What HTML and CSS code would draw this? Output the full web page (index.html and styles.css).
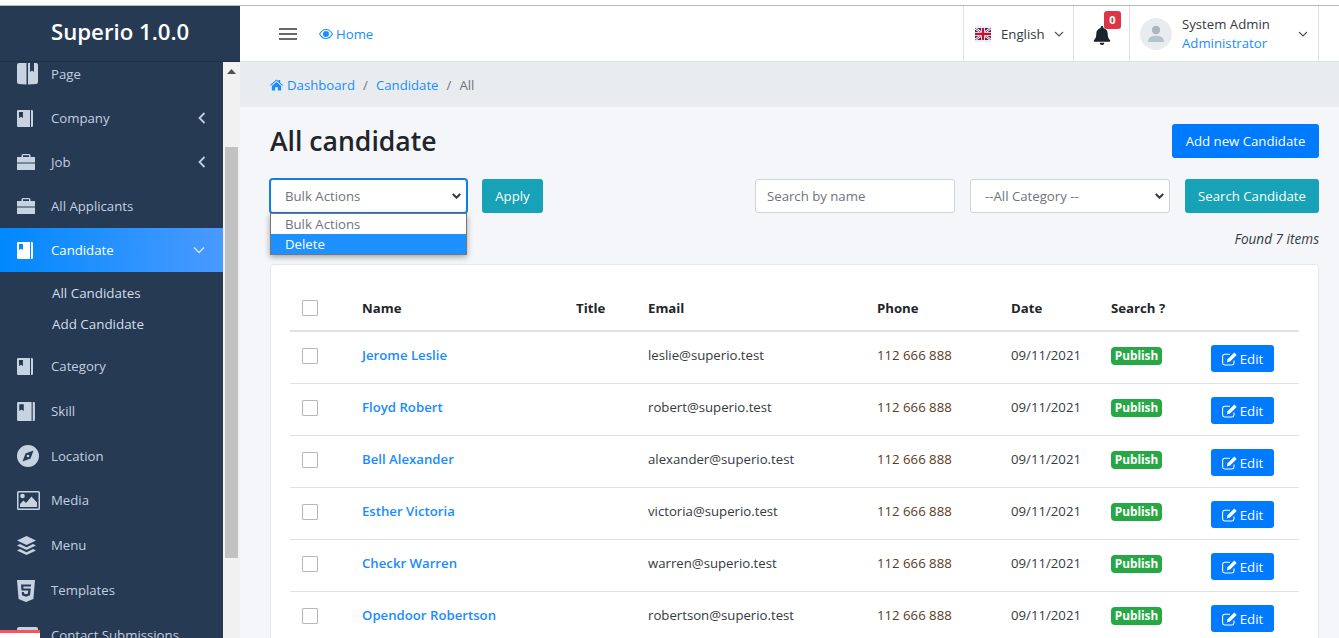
FILE: index.html
```html
<!DOCTYPE html>
<html lang="en">
<head>
<meta charset="utf-8">
<title>All candidate</title>
<link rel="stylesheet" href="styles.css">
</head>
<body>
<svg class="defs" width="0" height="0" aria-hidden="true">
  <symbol id="i-book" viewBox="0 0 16 17"><path fill-rule="evenodd" d="M1.200 0H13V17H1.200A1.200 1.200 0 0 1 0 15.800V1.200A1.200 1.200 0 0 1 1.200 0ZM2 2V8L4 6.800L6 8V2Z"/><path d="M14 0H14.800A1.200 1.200 0 0 1 16 1.200V15.800A1.200 1.200 0 0 1 14.800 17H14Z"/></symbol>
  <symbol id="i-brief" viewBox="0 0 18 16"><path d="M6 0H12A1.500 1.500 0 0 1 13.500 1.500V3H18V8.500H0V3H4.500V1.500A1.500 1.500 0 0 1 6 0ZM6 1.300V3H12V1.300Z" fill-rule="evenodd"/><path d="M0 9.500H18V16H0Z"/></symbol>
  <symbol id="i-edit" viewBox="0 0 15 14"><path fill="none" stroke="#fff" stroke-width="1.100" d="M12 8.500V11A2.200 2.200 0 0 1 9.800 13H2.700A2.200 2.200 0 0 1 .6 11V4.300A2.200 2.200 0 0 1 2.700 2.200H8"/><path fill="#fff" d="M12.300 .5L14.700 2.900L8 9.600L4.800 10.400L5.600 7.200Z"/></symbol>
</svg>

<div class="topstrip"></div>
<div class="app">
  <aside class="sidebar">
    <div class="brand">Superio 1.0.0</div>
    <div class="side-body">
      <nav class="menu">
        <a class="item first">
          <svg class="ic" width="21" height="23" viewBox="0 0 21 23"><path d="M2 0H9.500V21.500L2 21A2 2 0 0 1 0 19V2A2 2 0 0 1 2 0Z"/><path d="M11 0H13V9L15 7.500L17 9V0H19A2 2 0 0 1 21 2V19A2 2 0 0 1 19 21L11 21.500Z"/></svg>
          <span>Page</span>
        </a>
        <a class="item"><svg class="ic" width="16" height="17"><use href="#i-book"/></svg><span>Company</span><svg class="caret" width="8" height="12" viewBox="0 0 8 12"><path d="M6.500 1L1.500 6L6.500 11" fill="none" stroke="currentColor" stroke-width="1.800"/></svg></a>
        <a class="item"><svg class="ic" width="18" height="16"><use href="#i-brief"/></svg><span>Job</span><svg class="caret" width="8" height="12" viewBox="0 0 8 12"><path d="M6.500 1L1.500 6L6.500 11" fill="none" stroke="currentColor" stroke-width="1.800"/></svg></a>
        <a class="item"><svg class="ic" width="18" height="16"><use href="#i-brief"/></svg><span>All Applicants</span></a>
        <a class="item active"><svg class="ic" width="16" height="17"><use href="#i-book"/></svg><span>Candidate</span><svg class="caret down" width="12" height="8" viewBox="0 0 12 8"><path d="M1 1.500L6 6.500L11 1.500" fill="none" stroke="currentColor" stroke-width="1.500"/></svg></a>
        <div class="submenu">
          <a class="subitem">All Candidates</a>
          <a class="subitem">Add Candidate</a>
        </div>
        <a class="item tall"><svg class="ic" width="16" height="17"><use href="#i-book"/></svg><span>Category</span></a>
        <a class="item tall"><svg class="ic" width="18" height="19"><use href="#i-book"/></svg><span>Skill</span></a>
        <a class="item"><svg class="ic" width="22" height="22" viewBox="0 0 22 22"><path fill-rule="evenodd" d="M11 0A11 11 0 1 1 11 22A11 11 0 0 1 11 0ZM16.500 5.500L8.500 8.500L5.500 16.500L13.500 13.500ZM11 9.700A1.300 1.300 0 1 1 11 12.300A1.300 1.300 0 0 1 11 9.700Z"/></svg><span>Location</span></a>
        <a class="item tall"><svg class="ic" width="23" height="19" viewBox="0 0 23 19"><path fill-rule="evenodd" d="M1.500 0H21.500A1.500 1.500 0 0 1 23 1.500V17.500A1.500 1.500 0 0 1 21.500 19H1.500A1.500 1.500 0 0 1 0 17.500V1.500A1.500 1.500 0 0 1 1.500 0ZM1.500 1.500V17.500H21.500V1.500Z"/><circle cx="5.500" cy="5" r="2.300"/><path d="M3 16V13L6.500 9.500L9 12L14.500 5.500L20 11.500V16Z"/></svg><span>Media</span></a>
        <a class="item tall"><svg class="ic" width="19" height="19" viewBox="0 0 19 19"><path d="M9.500 0L19 4.500L9.500 9L0 4.500Z"/><path d="M3 8.100L9.500 11.200L16 8.100L19 9.500L9.500 14L0 9.500Z"/><path d="M3 13.100L9.500 16.200L16 13.100L19 14.500L9.500 19L0 14.500Z"/></svg><span>Menu</span></a>
        <a class="item tall"><svg class="ic" width="18" height="22" viewBox="0 0 18 22"><path fill-rule="evenodd" d="M0 0H18L16.400 19L9 22L1.600 19ZM4 4.500L4.500 10.500H11.300L11 13.500L9 14.200L7 13.500L6.900 12H4.800L5 15.200L9 16.700L13 15.200L13.700 8.500H6.500L6.300 6.500H13.900L14.100 4.500Z"/></svg><span>Templates</span></a>
        <a class="item"><svg class="ic" width="21" height="16" viewBox="0 0 21 16"><rect width="21" height="16" rx="2"/></svg><span>Contact Submissions</span></a>
      </nav>
      <div class="scrollbar">
        <svg class="sb-arrow" width="9" height="5" viewBox="0 0 9 5"><path d="M4.500 0L9 5H0Z"/></svg>
        <div class="sb-thumb"></div>
      </div>
    </div>
    <div class="corner"></div>
  </aside>

  <main class="main">
    <header class="topbar">
      <svg class="burger" width="18" height="12" viewBox="0 0 18 12"><path d="M0 1H18M0 6H18M0 11H18" stroke="#343a40" stroke-width="1.500"/></svg>
      <a class="home">
        <svg width="14" height="10" viewBox="0 0 14 10"><path fill="#1a8cff" fill-rule="evenodd" d="M7 0C10 0 12.600 2 14 5C12.600 8 10 10 7 10C4 10 1.400 8 0 5C1.400 2 4 0 7 0ZM7 1.100C4.600 1.100 2.500 2.600 1.200 5C2.500 7.400 4.600 8.900 7 8.900C9.400 8.900 11.500 7.400 12.800 5C11.500 2.600 9.400 1.100 7 1.100ZM7 2A3 3 0 1 1 7 8A3 3 0 0 1 7 2Z"/></svg>
        Home
      </a>
      <div class="tb-right">
        <div class="tb-cell lang">
          <svg class="flag" width="16" height="16" viewBox="0 0 16 16">
            <rect width="16" height="16" fill="#eee"/>
            <rect y="2" width="16" height="12" fill="#22346e"/>
            <path d="M0 2L16 14M16 2L0 14" stroke="#fff" stroke-width="2.400"/>
            <path d="M0 2L16 14M16 2L0 14" stroke="#c8102e" stroke-width=".8"/>
            <path d="M8 2V14M0 8H16" stroke="#fff" stroke-width="4"/>
            <path d="M8 2V14M0 8H16" stroke="#c8102e" stroke-width="2.400"/>
          </svg>
          <span>English</span>
          <svg class="chev" width="10" height="6" viewBox="0 0 10 6"><path d="M1 1L5 5L9 1" fill="none" stroke="#495057" stroke-width="1.100"/></svg>
        </div>
        <div class="tb-cell bell">
          <svg class="bell-ic" width="18" height="19" viewBox="0 0 18 20"><path fill="#1b232b" d="M9 0A1.400 1.400 0 0 1 10.400 1.400V2.100C13 2.700 15 5 15 8C15 12 16 13.500 17.500 15C18 15.600 17.700 16.500 16.800 16.500H1.200C.3 16.500 0 15.600 .5 15C2 13.500 3 12 3 8C3 5 5 2.700 7.600 2.100V1.400A1.400 1.400 0 0 1 9 0ZM6.500 17.500H11.500A2.500 2.500 0 0 1 6.500 17.500Z"/></svg>
          <span class="badge">0</span>
        </div>
        <div class="tb-cell user">
          <span class="avatar"><svg width="18" height="18" viewBox="0 0 18 18"><circle cx="9" cy="5" r="4.200" fill="#adb5bd"/><path d="M1 17C1 12.500 4.500 10.800 9 10.800C13.500 10.800 17 12.500 17 17Z" fill="#b4c4cd"/></svg></span>
          <span class="who"><span class="who-name">System Admin</span><span class="who-role">Administrator</span></span>
          <svg class="chev" width="10" height="6" viewBox="0 0 10 6"><path d="M1 1L5 5L9 1" fill="none" stroke="#495057" stroke-width="1.100"/></svg>
        </div>
      </div>
    </header>

    <div class="crumbs">
      <svg class="crumb-home" width="13" height="12" viewBox="0 0 14 12"><path fill="#1a8cff" d="M7 0L9.200 1.900V.6H11V3.500L14 6.100L13.300 6.900L7 1.500L.7 6.900L0 6.100ZM7 2.700L12 7V12H8.500V8.500H5.500V12H2V7Z"/></svg>
      <a>Dashboard</a><span class="sep">/</span><a>Candidate</a><span class="sep">/</span><span class="cur">All</span>
    </div>

    <section class="content">
      <div class="title-row">
        <h1>All candidate</h1>
        <button class="btn primary">Add new Candidate</button>
      </div>

      <div class="filter-row">
        <div class="bulk">
          <div class="field select focus">Bulk Actions<svg width="9" height="6" viewBox="0 0 9 6"><path d="M.8 1L4.500 4.700L8.200 1" fill="none" stroke="#343a40" stroke-width="2"/></svg></div>
          <ul class="dropdown">
            <li>Bulk Actions</li>
            <li class="sel">Delete</li>
          </ul>
        </div>
        <button class="btn info apply">Apply</button>
        <div class="field search">Search by name</div>
        <div class="field select cat">--All Category --<svg width="9" height="6" viewBox="0 0 9 6"><path d="M.8 1L4.500 4.700L8.200 1" fill="none" stroke="#343a40" stroke-width="2"/></svg></div>
        <button class="btn info wide">Search Candidate</button>
      </div>

      <p class="found">Found 7 items</p>

      <div class="card">
        <table>
          <colgroup>
            <col class="c-check"><col class="c-name"><col class="c-title"><col class="c-email"><col class="c-phone"><col class="c-date"><col class="c-search"><col>
          </colgroup>
          <thead>
            <tr><th><span class="check"></span></th><th>Name</th><th>Title</th><th>Email</th><th>Phone</th><th>Date</th><th>Search ?</th><th></th></tr>
          </thead>
          <tbody>
            <tr><td><span class="check"></span></td><td><a class="name">Jerome Leslie</a></td><td></td><td>leslie@superio.test</td><td>112 666 888</td><td>09/11/2021</td><td><span class="pub">Publish</span></td><td><button class="edit"><svg width="15" height="14" viewBox="0 0 15 14"><use href="#i-edit"/></svg>Edit</button></td></tr>
            <tr><td><span class="check"></span></td><td><a class="name">Floyd Robert</a></td><td></td><td>robert@superio.test</td><td>112 666 888</td><td>09/11/2021</td><td><span class="pub">Publish</span></td><td><button class="edit"><svg width="15" height="14" viewBox="0 0 15 14"><use href="#i-edit"/></svg>Edit</button></td></tr>
            <tr><td><span class="check"></span></td><td><a class="name">Bell Alexander</a></td><td></td><td>alexander@superio.test</td><td>112 666 888</td><td>09/11/2021</td><td><span class="pub">Publish</span></td><td><button class="edit"><svg width="15" height="14" viewBox="0 0 15 14"><use href="#i-edit"/></svg>Edit</button></td></tr>
            <tr><td><span class="check"></span></td><td><a class="name">Esther Victoria</a></td><td></td><td>victoria@superio.test</td><td>112 666 888</td><td>09/11/2021</td><td><span class="pub">Publish</span></td><td><button class="edit"><svg width="15" height="14" viewBox="0 0 15 14"><use href="#i-edit"/></svg>Edit</button></td></tr>
            <tr><td><span class="check"></span></td><td><a class="name">Checkr Warren</a></td><td></td><td>warren@superio.test</td><td>112 666 888</td><td>09/11/2021</td><td><span class="pub">Publish</span></td><td><button class="edit"><svg width="15" height="14" viewBox="0 0 15 14"><use href="#i-edit"/></svg>Edit</button></td></tr>
            <tr><td><span class="check"></span></td><td><a class="name">Opendoor Robertson</a></td><td></td><td>robertson@superio.test</td><td>112 666 888</td><td>09/11/2021</td><td><span class="pub">Publish</span></td><td><button class="edit"><svg width="15" height="14" viewBox="0 0 15 14"><use href="#i-edit"/></svg>Edit</button></td></tr>
          </tbody>
        </table>
      </div>
    </section>
  </main>
</div>
</body>
</html>
```
FILE: styles.css
```css
* { box-sizing: border-box; }
html, body { height: 100%; }
body {
  margin: 0;
  height: 638px;
  overflow: hidden;
  background: #fff;
  font-family: "Open Sans", "Noto Sans", "Liberation Sans", sans-serif;
  font-size: 13.2px;
  color: #212529;
  display: flex;
  flex-direction: column;
}
a { color: inherit; text-decoration: none; }
.defs { display: none; }
.topstrip {
  height: 6px;
  flex: none;
  background: #fff;
  border-bottom: 1px solid #b9b9b9;
}
.app { flex: 1; display: flex; min-height: 0; }

/* sidebar */
.sidebar {
  width: 240px;
  flex: none;
  display: flex;
  flex-direction: column;
  background: #263a53;
  position: relative;
  overflow: hidden;
}
.brand {
  height: 56px;
  flex: none;
  padding-left: 51px;
  line-height: 51px;
  font-size: 22.2px;
  font-weight: 600;
  color: #fff;
  border-bottom: 1px solid #1f3047;
}
.side-body { flex: 1; display: flex; min-height: 0; }
.menu { width: 223px; flex: none; overflow: hidden; }
.item {
  display: flex;
  align-items: center;
  height: 44px;
  padding-left: 17px;
  color: #c2cfe0;
  position: relative;
}
.item.first { margin-top: -10px; }
.item.tall { height: 45px; }
.item.tall span { margin-top: -2px; }
.item span { position: absolute; left: 51px; }
.ic { fill: #c8d3e2; flex: none; }
.caret { position: absolute; right: 17px; color: #c2cfe0; }
.item.active {
  color: #fff;
  background: linear-gradient(to right, #0088ff, #4a9aff);
}
.item.active .ic { fill: #fff; }
.item.active .caret { color: #cfe4ff; right: 18px; }
.submenu { height: 72px; padding: 6px 0 0 52px; }
.subitem {
  display: block;
  height: 31px;
  line-height: 30px;
  font-size: 13.4px;
  color: #d2deeb;
}
.scrollbar {
  width: 17px;
  flex: none;
  background: #f1f1f1;
  display: flex;
  flex-direction: column;
  align-items: center;
  padding-top: 7px;
}
.sb-arrow { fill: #505050; flex: none; }
.sb-thumb {
  width: 13px;
  height: 411px;
  margin-top: 73px;
  background: #c1c1c1;
  flex: none;
}
.corner {
  position: absolute;
  left: 0;
  bottom: 0;
  width: 40px;
  height: 8px;
  background: #fff;
  border-top: 3px solid #f8525f;
}

/* main */
.main { flex: 1; min-width: 0; display: flex; flex-direction: column; background: #f4f6f9; }
.topbar {
  height: 56px;
  flex: none;
  display: flex;
  align-items: center;
  padding-left: 39px;
  background: #fff;
  border-bottom: 1px solid #dee2e6;
}
.burger { flex: none; }
.home { margin-left: 22px; color: #1a8cff; display: flex; align-items: center; gap: 3px; }
.tb-right { margin-left: auto; margin-right: 20px; display: flex; height: 100%; border-right: 1px solid #dee2e6; }
.tb-cell {
  display: flex;
  align-items: center;
  border-left: 1px solid #dee2e6;
  height: 100%;
  position: relative;
}
.lang { width: 110px; padding-left: 11px; color: #343a40; }
.lang span { margin-left: 10px; }
.lang .chev { margin-left: 9px; }
.bell { width: 56px; padding-left: 19px; }
.bell-ic { margin-top: 4px; }
.badge {
  position: absolute;
  left: 30px;
  top: 5px;
  width: 17px;
  height: 18px;
  background: #dc3545;
  border-radius: 3px;
  color: #fff;
  font-size: 11px;
  font-weight: 700;
  line-height: 18px;
  text-align: center;
}
.user { width: 189px; padding-left: 10px; }
.avatar {
  width: 32px;
  height: 32px;
  border-radius: 50%;
  background: #e9ecef;
  display: flex;
  align-items: center;
  justify-content: center;
  flex: none;
}
.who { margin-left: 10px; display: flex; flex-direction: column; line-height: 19px; width: 116px; }
.who-name { color: #343a40; }
.who-role { color: #1a8cff; }

.crumbs {
  height: 45px;
  flex: none;
  display: flex;
  align-items: center;
  padding-left: 30px;
  background: #e9ecef;
  color: #1a8cff;
}
.crumb-home { margin-right: 4px; }
.sep { color: #6c757d; margin: 0 8px; }
.cur { color: #6c757d; }

.content { flex: 1; padding: 0 20px 0 30px; min-height: 0; overflow: hidden; }
.title-row { display: flex; justify-content: space-between; align-items: center; height: 34px; margin-top: 17px; }
h1 { margin: 0; font-size: 26.6px; font-weight: 600; color: #212529; }
.btn {
  height: 34px;
  padding: 0;
  border: 0;
  border-radius: 3px;
  color: #fff;
  font: inherit;
  flex: none;
  text-align: center;
}
.primary { background: #007bff; width: 147px; }
.info { background: #17a2b8; }
.wide { width: 134px; margin-left: 15px; }
.apply { margin-left: 15px; width: 61px; }
.filter-row { display: flex; align-items: center; margin-top: 21px; height: 34px; }
.field {
  height: 34px;
  background: #fff;
  border: 1px solid #ced4da;
  border-radius: 3px;
  display: flex;
  align-items: center;
  justify-content: space-between;
  color: #6c757d;
  flex: none;
}
.select svg { flex: none; }
.bulk { position: relative; width: 197px; flex: none; }
.bulk .field { width: 197px; padding: 0 5px 0 14px; }
.focus { border: 1px solid #0f7fe8; box-shadow: 0 0 0 1px #0f7fe8; }
.dropdown {
  position: absolute;
  left: 0;
  top: 34px;
  width: 197px;
  margin: 0;
  padding: 0;
  list-style: none;
  background: #fff;
  border: 1px solid #767676;
  box-shadow: 0 2px 6px rgba(0,0,0,.35);
  color: #6c757d;
}
.dropdown li { height: 20px; line-height: 20px; padding-left: 14px; }
.dropdown .sel { background: #1e90ff; color: #fff; }
.search { width: 200px; margin-left: auto; padding-left: 11px; }
.cat { width: 200px; margin-left: 15px; padding: 0 5px 0 14px; }
.found { margin: 17px 0 0; font-style: italic; font-size: 13.6px; text-align: right; line-height: 18px; color: #343a40; }
.card {
  margin-top: 16px;
  height: 500px;
  background: #fff;
  border: 1px solid #e6e8eb;
  border-radius: 4px;
  padding: 19px 19px 0;
}
table { width: 100%; border-collapse: collapse; table-layout: fixed; }
.c-check { width: 72px; }
.c-name { width: 214px; }
.c-title { width: 72px; }
.c-email { width: 229px; }
.c-phone { width: 134px; }
.c-date { width: 100px; }
.c-search { width: 100px; }
th { text-align: left; font-weight: 700; height: 47px; padding: 2px 0 0; border-bottom: 2px solid #dee2e6; color: #212529; }
td { height: 52px; padding: 0 0 5px; border-bottom: 1px solid #dee2e6; color: #343a40; }
td:nth-child(5) { color: #5a3a22; }
th:first-child, td:first-child { padding-left: 12px; }
td:first-child { padding-bottom: 3px; }
td:nth-child(7) { padding-bottom: 1px; }
td:last-child { padding-bottom: 0; }
.check { display: block; width: 16px; height: 16px; border: 1px solid #b5b8bb; border-radius: 1px; background: #fff; }
.name { color: #1a8cff; font-weight: 600; }
.pub {
  display: inline-block;
  width: 51px;
  height: 18px;
  background: #28a745;
  border-radius: 4px;
  color: #fff;
  font-size: 11.8px;
  font-weight: 700;
  line-height: 17px;
  text-align: center;
  vertical-align: 2px;
}
.edit {
  width: 63px;
  height: 27px;
  border: 0;
  border-radius: 3px;
  background: #007bff;
  color: #fff;
  font: inherit;
  display: flex;
  align-items: center;
  justify-content: center;
  gap: 3px;
  margin-top: 3px;
}
```
